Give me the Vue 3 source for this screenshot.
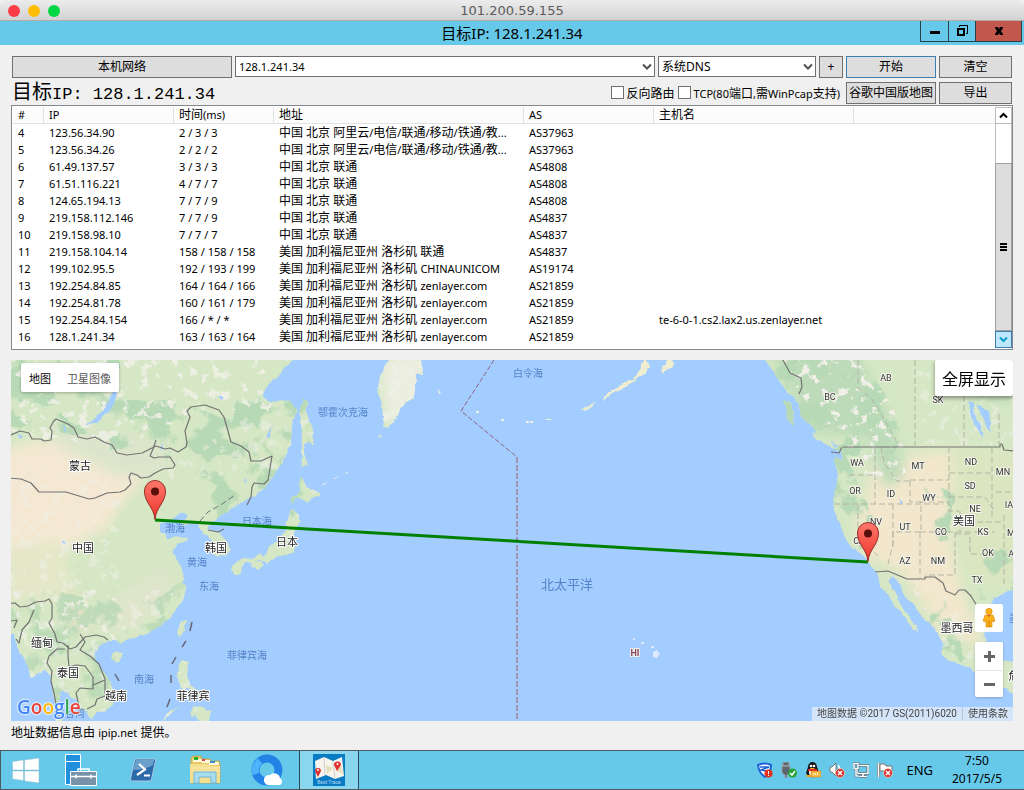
<script setup>
import { h, ref } from 'vue'

// Sets Latin runs one size smaller than the Chinese text around them.
const Mixed = (props) =>
  h('span', props.text.split(/([!-~]+)/).filter(Boolean).map((run) =>
    /^[!-~]/.test(run) ? h('span', { class: 'latin-run' }, run) : run))
Mixed.props = ['text']

const target = ref('128.1.241.34')
const dns = ref('系统DNS')
const reverse = ref(false)
const tcp = ref(false)

const columns = [
  ['#', 'c-num'], ['IP', 'c-ip'], ['时间(ms)', 'c-time'], ['地址', 'c-addr'],
  ['AS', 'c-as'], ['主机名', 'c-host'], ['', 'c-rest'],
]
const bj = '中国 北京 联通'
const la = '美国 加利福尼亚州 洛杉矶 '
const hops = [
  [4, '123.56.34.90', '2 / 3 / 3', '中国 北京 阿里云/电信/联通/移动/铁通/教...', 'AS37963', ''],
  [5, '123.56.34.26', '2 / 2 / 2', '中国 北京 阿里云/电信/联通/移动/铁通/教...', 'AS37963', ''],
  [6, '61.49.137.57', '3 / 3 / 3', bj, 'AS4808', ''],
  [7, '61.51.116.221', '4 / 7 / 7', bj, 'AS4808', ''],
  [8, '124.65.194.13', '7 / 7 / 9', bj, 'AS4808', ''],
  [9, '219.158.112.146', '7 / 7 / 9', bj, 'AS4837', ''],
  [10, '219.158.98.10', '7 / 7 / 7', bj, 'AS4837', ''],
  [11, '219.158.104.14', '158 / 158 / 158', la + '联通', 'AS4837', ''],
  [12, '199.102.95.5', '192 / 193 / 199', la + 'CHINAUNICOM', 'AS19174', ''],
  [13, '192.254.84.85', '164 / 164 / 166', la + 'zenlayer.com', 'AS21859', ''],
  [14, '192.254.81.78', '160 / 161 / 179', la + 'zenlayer.com', 'AS21859', ''],
  [15, '192.254.84.154', '166 / * / *', la + 'zenlayer.com', 'AS21859', 'te-6-0-1.cs2.lax2.us.zenlayer.net'],
  [16, '128.1.241.34', '163 / 163 / 164', la + 'zenlayer.com', 'AS21859', ''],
]

const countries = [
  ['蒙古', 80, 470], ['中国', 83, 552], ['韩国', 216, 552], ['日本', 287, 546], ['缅甸', 42, 647],
  ['泰国', 68, 677], ['越南', 116, 700], ['菲律宾', 193, 700], ['美国', 964, 525], ['墨西哥', 957, 632],
  ['危', 1014, 680],
]
const seas = [
  ['鄂霍次克海', 343, 416], ['白令海', 528, 377], ['日本海', 257, 525], ['渤海', 175, 532],
  ['黄海', 197, 566], ['东海', 209, 590], ['菲律宾海', 247, 659], ['南海', 144, 683], ['曼谷湾', 70, 717], ['墨', 1014, 622],
]
const states = [
  ['AB', 886, 381], ['BC', 830, 400], ['SK', 938, 403], ['WA', 857, 466], ['MT', 918, 469], ['ND', 971, 465],
  ['MN', 1003, 475], ['OR', 855, 494], ['ID', 891, 497], ['WY', 929, 501], ['SD', 970, 489], ['IA', 1009, 508],
  ['NE', 975, 512], ['NV', 876, 525], ['UT', 905, 530], ['CO', 941, 535], ['KS', 983, 535], ['MO', 1014, 536],
  ['CA', 859, 544], ['AZ', 905, 564], ['NM', 938, 564], ['OK', 988, 556], ['TX', 977, 583], ['AR', 1014, 557],
]
const pins = [[0, 0], [713, 42]]
</script>

<template>
  <div class="screen">
    <header class="mac-bar">
      <span class="lights"><i class="red"></i><i class="yellow"></i><i class="green"></i></span>
      <span class="mac-title">101.200.59.155</span>
    </header>

    <div class="win-bar">
      <h1 class="win-title">目标IP: 128.1.241.34</h1>
      <div class="win-controls">
        <button type="button" aria-label="最小化" class="w-min">
          <svg width="12" height="12"><rect x="1" y="6" width="10" height="3" /></svg>
        </button>
        <button type="button" aria-label="还原" class="w-max">
          <svg width="12" height="12" fill="none" stroke="#000"><path d="M3.5 2V.5h8v8H10" /><path d="M2 4h6v6H2z" stroke-width="2" /></svg>
        </button>
        <button type="button" aria-label="关闭" class="w-close">
          <svg width="10" height="10" viewBox="0 0 10 10"><path d="M1 1h3l1 2 1-2h3v1L7 5l2 3v1H6L5 7 4 9H1V8l2-3L1 2z" /></svg>
        </button>
      </div>
    </div>

    <main class="body">
      <div class="bar-one">
        <button type="button" class="btn">本机网络</button>
        <div class="combo">
          <input v-model="target" type="text" aria-label="目标IP" />
          <svg width="10" height="8" fill="none" stroke="#505050" stroke-width="2"><path d="M1 1.500l4 4 4-4" /></svg>
        </div>
        <div class="combo">
          <select v-model="dns" aria-label="DNS"><option>系统DNS</option></select>
          <svg width="10" height="8" fill="none" stroke="#505050" stroke-width="2"><path d="M1 1.500l4 4 4-4" /></svg>
        </div>
        <button type="button" class="btn plus">+</button>
        <button type="button" class="btn primary">开始</button>
        <button type="button" class="btn">清空</button>
      </div>
      <div class="bar-two">
        <p class="target">目标<span>IP: 128.1.241.34</span></p>
        <label><input v-model="reverse" type="checkbox" />反向路由</label>
        <label><input v-model="tcp" type="checkbox" /><Mixed text="TCP(80端口,需WinPcap支持)" /></label>
        <div class="bar-actions">
          <button type="button" class="btn">谷歌中国版地图</button>
          <button type="button" class="btn">导出</button>
        </div>
      </div>

      <section class="list">
        <table>
          <thead>
            <tr><th v-for="c in columns" :key="c[1]" :class="c[1]"><Mixed :text="c[0]" /></th></tr>
          </thead>
          <tbody>
            <tr v-for="row in hops" :key="row[0]">
              <td v-for="(cell, i) in row" :key="i"><Mixed v-if="i === 3" :text="cell" /><template v-else>{{ cell }}</template></td>
              <td></td>
            </tr>
          </tbody>
        </table>
        <div class="scroll">
          <button type="button" aria-label="向上滚动"><svg width="9" height="7" fill="none" stroke="#000" stroke-width="2"><path d="M1 5.500l3.500-3.500L8 5.500" /></svg></button>
          <div class="track"></div>
          <div class="thumb"><i></i><i></i><i></i></div>
          <button type="button" aria-label="向下滚动" class="hot"><svg width="9" height="7" fill="none" stroke="#0a9fc9" stroke-width="2"><path d="M1 1.500L4.500 5 8 1.500" /></svg></button>
        </div>
      </section>

      <section class="map">
        <svg class="canvas" viewBox="11 360 1002 361" preserveAspectRatio="xMidYMid slice" role="img" aria-label="路由地图">
          <defs>
            <filter id="soft" x="-30%" y="-30%" width="160%" height="160%"><feGaussianBlur stdDeviation="6" /></filter>
            <filter id="relief" color-interpolation-filters="sRGB" x="0" y="0" width="100%" height="100%">
              <feTurbulence type="fractalNoise" baseFrequency="0.1" numOctaves="4" seed="7" />
              <feColorMatrix values="0 0 0 0 0.94  0 0 0 0 0.94  0 0 0 0 0.91  12 0 0 0 -7.1" />
              <feComposite operator="in" in2="SourceGraphic" />
            </filter>
            <filter id="forest" color-interpolation-filters="sRGB" x="0" y="0" width="100%" height="100%">
              <feTurbulence type="fractalNoise" baseFrequency="0.035" numOctaves="5" seed="21" />
              <feColorMatrix values="0 0 0 0 0.72  0 0 0 0 0.85  0 0 0 0 0.71  0 10 0 0 -4.9" />
              <feComposite operator="in" in2="SourceGraphic" />
            </filter>
            <filter id="coast" x="0" y="0" width="100%" height="100%">
              <feTurbulence type="fractalNoise" baseFrequency="0.12" numOctaves="3" seed="3" />
              <feDisplacementMap in="SourceGraphic" scale="5" xChannelSelector="R" yChannelSelector="G" />
            </filter>
            <clipPath id="land">
              <path d="M0 350H300L293 360 283 370 270 384 263 394 264 398 271 402 283 401 288 399 295 408 296 412 292 425 291 444 283 461 274 475 268 484 260 492 250 497 241 503 231 509 222 514 216 520 209 526 207 530 214 530 221 535 228 542 230 549 228 555 218 557 213 554 214 546 209 535 203 533 198 528 197 522 189 523 184 526 181 524 187 517 187 513 181 513 174 519 166 521 160 524 160 531 165 534 167 539 175 535 188 538 187 542 179 543 173 550 175 556 181 566 184 578 182 582 186 586 186 592 183 600 176 611 169 619 160 627 151 632 140 635 126 640 119 644 117 641 108 641 101 644 95 652 95 660 103 671 111 682 115 694 113 704 106 711 98 713 91 719 88 717 88 712 80 710 76 700 70 696 64 691 61 692 59 702 61 710 62 724H56L55 710 53 695 50 675 44 669 34 677 30 676 28 666 24 658 17 647 14 635 8 630Z" />
              <path d="M303 398l4 3 0 13 5 16 2 15-4-3-6 1 0 12 5 12-4-3-3 5-1-19 1-15-2-26z" />
              <path d="M299 478l7 7 7 5 7 2-1 4-6 1-5 6-8-5-5 2-3 5-1-6 5-4 4-4z" />
              <path d="M290 513l4-4 5 6 0 8-4 8-1 13 0 7-8 3-7 3-8 2-4 5-6-4-8 2-7 0-4 5-2 8-5 0-4-5 2-6 8-5 13-1 5-4 7 2 3-8 5-5 7-4 4-10z" />
              <path d="M252 562l9-1 3 4-7 4-6-1z" />
              <path d="M390 358l-7 10-5 22 4 15 2 22 3 1 9-8 5-13 11-9 4-12 0-13 7 2-1-17z" />
              <path d="M381 434l1 3-5 1z M113 654l6-3 5 2-3 7-6 2-4-4z M181 621l5-2-2 11-4 9-3-6z" />
              <path d="M178 663l4-3 7 2-2 13 3 10 7 4 7 9-5-1-10-7-7 0-5-14z M193 705l10 2 8 5-2 9-8 2-4-7-6 1z M180 708l-18 12 7-8z" />
              <path d="M643 358l7 8-8 10-14 9-16 9-9 7 1-4 18-14 12-3 9-18z M661 367l5-3 3-7 6 5-4 7-9 3z M581 411l8-6 6-3-2 4-8 5z" />
              <path d="M764 350L768 365 775 373 782 386 792 395 799 405 801 417 811 426 821 438 830 446 841 452 843 460 836 457 835 461 837 476 835 489 833 500 834 510 840 523 845 538 852 548 863 555 869 564 875 571 880 584 890 598 895 606 890 603 898 610 906 617 913 630 918 632 917 626 908 615 901 604 894 592 889 580 892 577 899 583 905 597 914 605 922 617 933 626 940 637 943 644 941 654 953 662 972 669 984 681 1000 686 1018 696V662L1002 661 995 666 986 648 984 630 985 610 993 600 1006 591 1018 590V350Z" />
              <path d="M784 400l7 3 2 11 2 14-8-11z M811 431l14 5 13 9 1 5-7-2-17-9z" />
            </clipPath>
            <linearGradient id="pin" x1="0" y1="0" x2="0" y2="1"><stop offset="0" stop-color="#ff776b" /><stop offset="1" stop-color="#ea352b" /></linearGradient>
          </defs>
          <rect x="-500" y="-100" width="2100" height="1300" fill="#a3ccff" />

          <g filter="url(#coast)">
            <g clip-path="url(#land)">
              <rect x="0" y="350" width="1024" height="380" fill="#d5e7c4" />
              <g filter="url(#soft)">
                <path d="M0 450L40 440 115 455 150 472 125 500 105 530 65 550 0 570Z" fill="#f4e8d2" />
                <path d="M0 550L60 540 75 590 40 605 0 598Z" fill="#e4e8c8" />
                <path d="M50 425l90 12 40 15-20 25-40 0-60-30z" fill="#dce5cb" />
                <path d="M105 605l60-40 10 25-40 40-40 0z" fill="#dfe5cb" />
                <path d="M60 600l25 0 5 25-20 5z" fill="#f0e4cb" />
                <path d="M862 510L880 450 895 475 910 455 965 448 950 495 950 540 965 600 985 650 940 630 900 570 866 558 855 530Z" fill="#f2e7cc" />
                <path d="M950 450h75v120l-30 20-30-20-10-60z" fill="#dbe6c1" />
                <path d="M770 350L855 350 890 420 905 475 885 490 870 440 810 430Z" fill="#bddbb9" />
                <path d="M960 350h60v50l-40 0z" fill="#bfdfbc" />
                <path d="M380 355h45v70h-40z" fill="#eceee0" />
                <path d="M580 350h100v65h-100z" fill="#f1edd2" />
              </g>
              <g filter="url(#forest)">
                <path d="M0 350h120v75l-40 10-80-10z" />
                <path d="M110 400l60 0 60 20 30 40-30 30-50-20-40-25-30 5z" />
                <path d="M235 400l85-20v90l-60 40-40 10-10-20 20-40z" />
                <path d="M0 610l50-20 45 10 60 0 30-20v50L120 720H0z" opacity=".8" />
                <path d="M760 350h95l50 75-10 30H845l30 65-15 30-35-40z" />
                <path d="M925 590l20 10 20 60-15 5-20-40z M225 540h100V390h-40z M925 475l30 20-10 60-20-10z M980 550h40v50h-40z" />
              </g>
              <g filter="url(#relief)">
                <path d="M0 350h300v60H200L120 450 0 430z" opacity=".85" />
                <path d="M0 470h120v170H0z" opacity=".5" />
                <path d="M150 480h120v60h80V390h-60z" opacity=".5" />
                <path d="M0 590h220v130H0z" opacity=".55" />
                <path d="M370 350h60v90h-60z" opacity=".8" />
                <path d="M770 350h70l50 40 20 90H870l-50-60z" />
                <path d="M910 355h110v90H920z M900 550l60 60 60 80-40-5-50-50z" opacity=".5" />
              </g>
              <g fill="#a3ccff">
                <path d="M113 391l4 2-3 10-9 12-10 8-9 1 9-6 11-11z" />
                <path d="M63 425l4 3-2 6z M18 433l5 3-1 3z M218 396l7 0-3 4z M159 447l4-1-2 5z M244 479l3-1 0 6z M272 425l-3 13-3-1z M59 541l5 0 2 3z" />
                <path d="M968 401l5 2 2 12 8 17 0 5-9-13z M976 403l12 9 4 20-6-8z M830 440l9 6-4 1z M899 498l3 5-3 1z" />
              </g>
            </g>
          </g>

          <g fill="#dce9ff">
            <path d="M653 652l4-2 3 4-3 4-4-1z M641 642h3v2h-3z M651 646h3v2h-3z M633 638h2v2h-2z" />
            <path d="M526 421h3v2h-3z M530 421h3v2h-3z M546 419h4l3 1h-7z M501 419h3v2h-3z M476 411h3v2h-3z M438 389l3 4-2 1z M322 485l6-4-4 4z M333 479l7-4-5 4z M345 473l4-2-3 3z" fill="#edf1e4" />
          </g>

          <g class="border">
            <path d="M11 435l9-4 9 2 3 6 9 0 3 2 7-1 1-9-2-3 3-6 3-3 12 5 6 4 4 9 9 2 8-2 9 5 8 3 5 8 10 2 15-2 14-7 9 3 5-1 8 4 8-5 1-4-2-12 5-14-3-6 4-4 14-2 14 5 5 7 4 14 3 11 10 4 8 6 2 9 10 0 11-5-2 12-2 12-4 4-10-1-2 4-1 10-4 8" />
            <path d="M156 440l-3 9-3 7 4 2 5-1 11 0 5 8-2 3-10 1-8 4-6 4-8 1-4-3-6-2-2 4 2 7-6 6-5 2-13 1-12 5-6 1-10-3-13-4-27 0-8-9-10-4-13-1" />
            <path d="M0 604l15-1 5 4 8-1 8-4 9-1 4-2 3 5 0 14-3 5 6 11 2 8 6 1 7 6 6-2 9-10 11-2 8 2 4 3" />
            <path d="M34 610l-5 12-7 8-3 13-3-4M11 621l6-1-3 8M65 649l-8 0-8 7-2 7 5 8-1 10 3 12 3 17M68 645l0 11 1 11 7-2 9 1 8 11 0 12-13-1-4 5 3 13M80 634l5 8-5 8 10 6 9 8 6 15 0 17-8 3-2 6-8 4M105 680l-12 5M208 530l10 2 6-3" />
            <path d="M783 360l7 13 11 5 1 9-3 7M843 447h157v-3h2l2 6 10 1M831 452l8 1 3-6M875 572l13-1 19 8h18l0-2 10 0 8 6 3 8 9 4 4-5 6 0 6 6 6 10" />
          </g>
          <g class="state-line">
            <path d="M915 360v87M858 360v28l13 10 8 12 14 25 6 12M964 360v87M999 414v30M834 504h109M858 504v30l20 22M893 504v45M875 447v57M881 447l3 15 9 14 4 5h13M849 475h26M910 481v21h11v30h-29M910 480h39M949 447v55M949 473h43M992 448v70M949 497h36l10 15M920 502h29v9h10M960 511v20M959 522h45M920 532h75M920 532v47M893 532v12l-5 20M955 532v43h-30M955 534h15v20h26M996 492h18M1004 515v70M964 360v-5" />
            <path d="M200 521l8-9 14-8 13-9" stroke="#777" />
          </g>
          <path d="M494 360l-33 51 56 46" fill="none" stroke="#8f6180" stroke-dasharray="5 2" />
          <path d="M517 457v264" fill="none" stroke="#a593b7" stroke-width="2" stroke-dasharray="6 2" />
          <g fill="none" stroke="#667" stroke-width="1.500"><path d="M192 622l-2 9M186 641l-4 6M176 657l-4 7M171 675v8M170 699l-3 8M115 674l4 7" /></g>

          <g class="country"><text v-for="t in countries" :key="t[0]" :x="t[1]" :y="t[2]">{{ t[0] }}</text></g>
          <g class="sea"><text v-for="t in seas" :key="t[0]" :x="t[1]" :y="t[2]">{{ t[0] }}</text><text class="ocean" x="567" y="589">北太平洋</text></g>
          <g class="state"><text v-for="t in states" :key="t[0]" :x="t[1]" :y="t[2]">{{ t[0] }}</text><text class="hi" x="635" y="656">HI</text></g>

          <path d="M155 520L868 562" stroke="#008000" stroke-width="3" />
          <g v-for="p in pins" :key="p[0]" :transform="`translate(${p[0]} ${p[1]})`">
            <path d="M155 519.500C154 507 144.500 503 144.500 491a10.500 10.500 0 0 1 21 0C165.500 503 156 507 155 519.500z" fill="url(#pin)" stroke="#982b25" />
            <circle cx="155" cy="491.500" r="4" fill="#590f0c" />
          </g>
        </svg>

        <div class="map-types"><button type="button" class="on">地图</button><button type="button">卫星图像</button></div>
        <button type="button" class="fullscreen">全屏显示</button>
        <div class="map-tools">
          <button type="button" class="pegman" aria-label="街景小人">
            <svg width="14" height="20" viewBox="0 0 14 20"><circle cx="7" cy="3.500" r="3.200" fill="#fbb117" stroke="#d58a10" stroke-width=".6" /><path d="M3 7h8l2 6-2 1-1-2v7H4v-7l-1 2-2-1z" fill="#fbb117" stroke="#d58a10" stroke-width=".6" /><path d="M5 7h4l-2 2z" fill="#e0652a" /><path d="M7 13v6" stroke="#c97d10" /></svg>
          </button>
          <div class="zoom">
            <button type="button" aria-label="放大"><svg width="11" height="11" stroke="#666" stroke-width="3"><path d="M5.500 0v11M0 5.500h11" /></svg></button>
            <button type="button" aria-label="缩小"><svg width="11" height="11" stroke="#666" stroke-width="3"><path d="M0 5.500h11" /></svg></button>
          </div>
        </div>
        <a href="#" class="google" aria-label="Google"><b class="gb">G</b><b class="gr">o</b><b class="gy">o</b><b class="gb">g</b><b class="gg">l</b><b class="gr">e</b></a>
        <div class="credit"><span>地图数据 ©2017 GS(2011)6020</span><a href="#">使用条款</a></div>
      </section>
      <p class="source"><Mixed text="地址数据信息由 ipip.net 提供。" /></p>
    </main>

    <footer class="taskbar">
      <button type="button" class="start" aria-label="开始菜单">
        <svg width="28" height="27" fill="#fff" stroke="#8fb9c9" stroke-width=".5"><path d="M.5 4.500l11-1.500v10H.5zM12.500 3L27 1v12H12.500zM.5 14h11v9.500L.5 22zM12.500 14H27v12l-14.500-2z" /></svg>
      </button>
      <button type="button" class="task" aria-label="服务器管理器">
        <svg width="32" height="32" viewBox="0 0 32 32"><path d="M.5.500h15v30H.5z" fill="#2090dc" stroke="#fff" /><path d="M0 7.500h16" stroke="#fff" /><path d="M5.500 17.500h26v14h-26z" fill="#7891a8" stroke="#fff" /><path d="M13 17v-2h11v2M5 22.500h27M11 20.500v4M26 20.500v4" fill="none" stroke="#fff" stroke-width="1.500" /></svg>
      </button>
      <button type="button" class="task" aria-label="PowerShell">
        <svg width="28" height="24" viewBox="0 0 28 24"><path d="M7 1h18q2 0 1.500 2l-4 18q-.5 2-2.500 2H3q-2 0-1.500-2l4-18Q6 1 7 1z" fill="#2c6bab" stroke="#a9c8de" /><path d="M7 2h18l-1 5Q16 12 4 12z" fill="#6b9fcc" /><path d="M10 6l6 5.500L8 17M15 17.500h6" fill="none" stroke="#fff" stroke-width="2.200" /></svg>
      </button>
      <button type="button" class="task" aria-label="文件资源管理器">
        <svg width="32" height="30" viewBox="0 0 32 30"><path d="M2 3l2-2h8l1 3h8l1 2h8l1 3v19H2z" fill="#e9c965" stroke="#bc983e" stroke-width=".7" /><path d="M4 4h10v3H4zM13 5h8v3h-8zM20 7h10v3H20z" fill="#fff8dc" /><path d="M5 2h4v3H5z" fill="#26aa32" /><path d="M13 4h3v2h-3z" fill="#d44" /><path d="M21 6h5v2h-5z" fill="#3992ce" /><path d="M1 9h19l2 2h9v17H1z" fill="#f4df91" /><path d="M1 13h30M1 16h30" stroke="#fae9b3" /><path d="M5 28V17h22v11h-5v-6H10v6z" fill="#a8dcef" stroke="#6fb8d6" /></svg>
      </button>
      <button type="button" class="task" aria-label="浏览器">
        <svg width="32" height="32" viewBox="0 0 32 32"><circle cx="16" cy="16" r="11.500" fill="none" stroke="#2382e5" stroke-width="8" /><path d="M5 20A12 12 0 0 1 9 7" fill="none" stroke="#4bb4fa" stroke-width="7" /><path d="M17 31a5 5 0 0 1-3-8 5 5 0 0 1 5-2 6 6 0 0 1 10 3 4 4 0 0 1 0 7z" fill="#fff" /></svg>
      </button>
      <button type="button" class="task active" aria-label="Best Trace">
        <svg width="32" height="32" viewBox="0 0 32 32"><rect width="32" height="32" fill="#097bc2" /><path d="M2 7l9-4 9 4 9-4 2 19-9 3-9-4-10 4z" fill="#f6f4ec" /><path d="M11 3l1 18M20 7l2 18" stroke="#ccd0cc" /><path d="M13 11l7 3-6 6zM22 16l7-4 1 8z" fill="#e6dfbd" /><path d="M5 23l-3-6a3 3 0 1 1 6 0zM24 17l-3-6a3.500 3.500 0 1 1 7 0z" fill="#df2f2f" /><circle cx="5" cy="16" r="1" fill="#fff" /><circle cx="24.500" cy="10" r="1" fill="#fff" /><text x="16" y="30" text-anchor="middle" font-family="Roboto, sans-serif" font-size="5" fill="#b5dcf2">Best Trace</text></svg>
      </button>
      <div class="tray">
        <svg width="16" height="16"><path d="M1 3q7-3 13 0 0 8-6 12Q2 11 1 3z" fill="#fff" stroke="#1b63d8" stroke-width="2" /><path d="M3 5l9 0-8 3 6 1" fill="none" stroke="#1b63d8" stroke-width="1.500" /><circle cx="11.500" cy="11.500" r="4" fill="#e0301e" /><path d="M11.500 9v3M11.500 13v1" stroke="#fff" /></svg>
        <svg width="16" height="16"><path d="M2 0h6v4H2zM1 4h8v7l-3 2v3H4v-3l-3-2z" fill="#5d646c" stroke="#9ba3aa" /><circle cx="11.500" cy="11" r="4.500" fill="#24a336" /><path d="M9 11l2 2 3-4" fill="none" stroke="#fff" stroke-width="1.500" /></svg>
        <svg width="16" height="16"><path d="M3 5a4.500 5 0 0 1 9 0l2 6-2 3H3l-2-3z" fill="#151515" /><ellipse cx="7" cy="10" rx="3" ry="4" fill="#fff" /><circle cx="6" cy="4" r="1.300" fill="#fff" /><circle cx="9" cy="4" r="1.300" fill="#fff" /><path d="M5 6h5l-2 2z" fill="#f5a21b" /><path d="M3 8h9" stroke="#e22b20" stroke-width="2" /><path d="M1 13h5v2H2z" fill="#f5a21b" /><path d="M6 9h10v6H10l-2 1v-1H6z" fill="#f8ba43" stroke="#b87918" stroke-width=".5" /><path d="M8 12h6" stroke="#fff" stroke-width="1.500" stroke-dasharray="1 1" /></svg>
        <svg width="16" height="16"><path d="M1 5h2l4-4v13l-4-4H1z" fill="#fff" stroke="#777" /><path d="M9 3q3 4 1 9" fill="none" stroke="#fff" stroke-width="1.500" /><circle cx="11" cy="11" r="4.500" fill="#d93030" stroke="#ffd" stroke-width=".5" /><path d="M9 9l4 4M13 9l-4 4" stroke="#fff" stroke-width="1.500" /></svg>
        <svg width="16" height="16" fill="none" stroke="#fff"><path d="M6 3.500h9v8H4.500V8M10 12v2M6 14.500h8" stroke="#44616c" stroke-width="3" /><path d="M6 3.500h9v8H4.500V8M10 12v2M6 14.500h8" stroke-width="1.500" /><path d="M1 1.500h4v5H1zM3 6v8h2" stroke="#44616c" stroke-width="2.500" /><path d="M1 1.500h4v5H1zM3 6v8h2" stroke-width="1.500" /></svg>
        <svg width="16" height="16"><path d="M1.500 1v14" stroke="#777" stroke-width="3" /><path d="M1.500 1v14" stroke="#fff" stroke-width="1.500" /><path d="M3 2h5l1 2h6v6H8L7 9H3z" fill="#fff" stroke="#777" /><circle cx="11" cy="11" r="4.500" fill="#d93030" stroke="#ffd" stroke-width=".5" /><path d="M9 9l4 4M13 9l-4 4" stroke="#fff" stroke-width="1.500" /></svg>
      </div>
      <span class="lang">ENG</span>
      <div class="clock"><time>7:50</time><time>2017/5/5</time></div>
    </footer>
  </div>
</template>

<style>
body { margin: 0; background: #f0f0f0; }
.latin-run { font-size: 11px; }
</style>

<style scoped>
.screen { min-height: 100vh; display: flex; flex-direction: column; background: #f0f0f0; color: #000; font: 12px "Noto Sans", "Noto Sans CJK SC", sans-serif; }
.screen * { box-sizing: border-box; }
button, input, select { font: inherit; color: inherit; margin: 0; padding: 0; border-radius: 0; }
p, h1 { margin: 0; font-weight: normal; }

.mac-bar { height: 21px; display: grid; grid-template-columns: 1fr auto 1fr; align-items: center; background: linear-gradient(#ececec, #d2d2d2); border-bottom: 1px solid #b5aca6; border-radius: 5px 5px 0 0; }
.lights { display: flex; gap: 8px; padding: 1px 0 0 8px; }
.lights i { width: 12px; height: 12px; border-radius: 50%; }
.red { background: #fc3d47; }
.yellow { background: #ffbd03; }
.green { background: #00d742; }
.mac-title { padding-top: 2px; font: 13px/18px "DejaVu Sans", sans-serif; color: #5c5c5c; }

.win-bar { height: 24px; display: grid; grid-template-columns: 1fr auto 1fr; background: #66c9ea; }
.win-title { grid-column: 2; font-size: 15px; line-height: 24px; }
.win-controls { display: flex; justify-self: end; height: 21px; margin-right: 2px; border: solid #273f49; border-width: 0 1px 1px; }
.win-controls button { display: flex; align-items: center; justify-content: center; border: 0; background: none; }
.w-min { width: 27px; }
.win-controls .w-max { width: 27px; border-left: 1px solid #273f49; }
.win-controls .w-close { width: 46px; border-left: 1px solid #273f49; background: #c2574d; }

.body { flex: 1; display: flex; flex-direction: column; padding: 11px 11px 0; }
.bar-one { display: grid; grid-template-columns: 220px 1fr 158px 24px 90px 73px; gap: 3px; padding: 0 1px; }
.btn { height: 22px; background: #ddd; border: 1px solid #707070; white-space: nowrap; line-height: 20px; text-align: center; }
.primary { border-color: #3c7fb1; }
.combo { position: relative; height: 21px; }
.combo input, .combo select { width: 100%; height: 21px; padding: 0 3px; border: 1px solid #707070; background: #fff; outline: 0; appearance: none; }
.combo input { font-size: 11px; }
.combo svg { position: absolute; right: 3px; top: 7px; }
.bar-two { display: flex; align-items: center; gap: 3px; padding: 3px 1px 1px; }
.target { flex: 1; font-size: 20px; line-height: 22px; white-space: nowrap; }
.target span { font: 17px "Liberation Mono", monospace; }
.bar-two label { display: flex; align-items: center; gap: 3px; white-space: nowrap; }
.bar-two label input { width: 13px; height: 13px; appearance: none; background: #fff; border: 1px solid #707070; }
.bar-actions { display: grid; grid-template-columns: 90px 73px; gap: 3px; margin-left: 3px; }

.list { display: flex; min-height: 245px; background: #fff; border: 1px solid #828790; padding: 1px 0 1px 1px; }
table { flex: 1; width: 0; table-layout: fixed; border-collapse: separate; border-spacing: 0; align-self: flex-start; }
th { height: 17px; padding: 0 5px; text-align: left; font-weight: normal; line-height: 16px; background: #fcfcfc; border: solid #e2e2e2; border-width: 0 1px 1px 0; }
.c-rest { border-right: 0; }
.c-num { width: 31px; }
.c-ip { width: 130px; }
.c-time { width: 100px; }
.c-addr { width: 250px; }
.c-as { width: 130px; }
.c-host { width: 200px; }
td { height: 17px; padding: 0 5px; font-size: 11px; line-height: 17px; white-space: nowrap; overflow: hidden; }
td:nth-child(4) { font-size: 12px; padding-right: 0; }
.scroll { width: 17px; display: flex; flex-direction: column; }
.scroll button { height: 17px; display: flex; align-items: center; justify-content: center; background: #fff; border: 1px solid #bcbcbc; }
.scroll .hot { background: #bee6fd; border-color: #3c7fb1; }
.track { flex: 39; border: solid #bcbcbc; border-width: 0 1px; }
.thumb { flex: 168; display: flex; flex-direction: column; align-items: center; justify-content: center; gap: 1px; background: #ddd; border: 1px solid #a0a0a0; }
.thumb i { width: 7px; height: 2px; background: #000; }

.map { position: relative; flex: 1; min-height: 300px; margin-top: 10px; overflow: hidden; }
.canvas { position: absolute; inset: 0; width: 100%; height: 100%; }
.border { fill: none; stroke: #737373; stroke-width: 1.200; stroke-linejoin: round; }
.state-line { fill: none; stroke: #b3b5a6; stroke-dasharray: 6 3; }
.canvas text { text-anchor: middle; paint-order: stroke; stroke-linejoin: round; }
.country { font: 11px "Noto Sans CJK SC", sans-serif; fill: #222; stroke: #fff; stroke-width: 2px; }
.sea { font: 10px "Noto Sans CJK SC", sans-serif; fill: #5484c8; }
.sea .ocean { font-size: 13px; }
.state { font: 9px Roboto, sans-serif; fill: #333; stroke: #f4f4ec; stroke-width: 2px; }
.state .hi { fill: #88465c; font-weight: bold; }

.map button { border: 0; background: #fff; }
.map-types { position: absolute; left: 10px; top: 3px; display: flex; height: 29px; font-size: 11px; border-radius: 2px; overflow: hidden; box-shadow: 0 1px 3px #0004; }
.map-types button { padding: 0 8px; color: #565656; }
.map-types .on { color: #000; }
.map .fullscreen { position: absolute; top: 0; right: 0; height: 36px; padding: 0 7px; font-size: 16px; border-radius: 2px; box-shadow: 0 2px 4px #0006; }
.map-tools { position: absolute; right: 10px; bottom: 24px; width: 28px; display: grid; gap: 10px; }
.map-tools button { width: 28px; height: 28px; display: flex; align-items: center; justify-content: center; border-radius: 2px; }
.zoom { background: #fff; border-radius: 2px; box-shadow: 0 1px 3px #0003; }
.zoom button + button { height: 27px; border-top: 1px solid #e6e6e6; }
.google { position: absolute; left: 6px; bottom: 0; display: flex; font: 19px/28px "Open Sans", sans-serif; text-decoration: none; text-shadow: 0 0 2px #fff, 0 0 2px #fff, 0 0 2px #fff; }
.google b { font-weight: 600; }
.gb { color: #4285f4; }
.gr { color: #ea4335; }
.gy { color: #fbbc05; }
.gg { color: #34a853; }
.credit { position: absolute; right: 0; bottom: 0; display: flex; font: 10px/14px Roboto, "Noto Sans CJK SC", sans-serif; color: #444; background: #e1ebf7cc; }
.credit > * { padding: 0 5px; }
.credit a { color: #444; text-decoration: none; border-left: 1px solid #b8c8dc; }
.source { height: 29px; line-height: 24px; }

.taskbar { height: 40px; display: flex; align-items: center; background: #66c9ea; border: solid #4d5a60; border-width: 1px 0 1px 1px; }
.taskbar button { display: flex; align-items: center; justify-content: center; align-self: stretch; border: 0; background: none; }
.taskbar .start { width: 49px; }
.taskbar .task { width: 62px; }
.taskbar .active { width: 60px; margin-left: 1px; background: #8ad6ef; border: solid #2b4854; border-width: 0 1px; }
.tray { margin-left: auto; display: flex; gap: 8px; }
.lang { margin-left: 13px; font-size: 13px; }
.clock { width: 91px; padding-right: 3px; display: grid; text-align: center; line-height: 18px; }
</style>
